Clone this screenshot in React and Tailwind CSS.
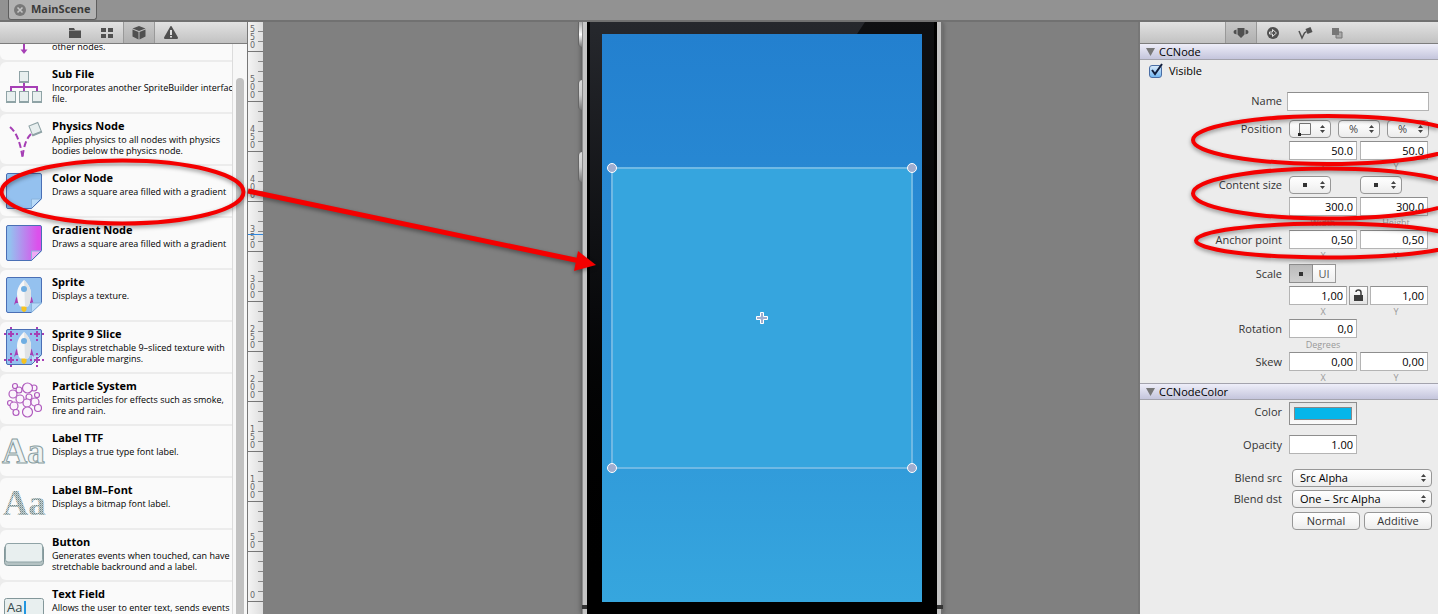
import React from "react";

const stroke = "#8fa3a6";
const paper = "#e8efef";
const purple = "#a63fb5";

function Rocket() {
  return (
    <g>
      <path d="M18 20l-2 3-2 7 2-2h4zM30 20l2 3 2 7-2-2h-4z" fill={purple} />
      <path d="M21.500 31h5v4q-2.500 4-5 0z" fill="#f6c21c" />
      <path d="M24 5c5 5 7 9 7 14 0 5-1 10-3 12.500h-8c-2-2.500-3-7.500-3-12.500 0-5 2-9 7-14z" fill="#f6f7f8" />
      <path d="M24 5c5 5 7 9 7 14 0 5-1 10-3 12.500h-3z" fill="#dfe3e6" />
      <circle cx="24" cy="14" r="3" fill="#6faee2" />
    </g>
  );
}

function Sheet({ fill, fold = "#b9dbf8" }) {
  return (
    <g>
      <path d="M8 2.500h32q1.500 0 1.500 1.500v23.500l-10 10H8q-1.500 0-1.500-1.500V4q0-1.500 1.500-1.500z" fill={fill} />
      <path d="M31.500 37.500v-9.500h10z" fill={fold} stroke="#8bb4de" strokeWidth="1" />
      <path d="M8 2.500h32q1.500 0 1.500 1.500v23.500l-10 10H8q-1.500 0-1.500-1.500V4q0-1.500 1.500-1.500z" fill="none" stroke="#4a6fb5" />
    </g>
  );
}

function Card({ x, y }) {
  return (
    <g>
      <rect x={x} y={y} width="9" height="11" fill={paper} stroke={stroke} />
      <path d={`M${x} ${y + 10.5}h9`} stroke={stroke} strokeWidth="2" />
    </g>
  );
}

function Plus({ x, y }) {
  return (
    <path
      d={`M${x - 3} ${y}h6M${x} ${y - 3}v6M${x - 7} ${y}h2M${x + 5} ${y}h2M${x} ${y - 7}v2M${x} ${y + 5}v2`}
      stroke={purple}
      strokeWidth="2"
    />
  );
}

const icons = {
  subfile: (
    <g>
      <path d="M24 15v9M11 24v-4h26v4" fill="none" stroke={purple} strokeWidth="2" />
      <Card x={19.5} y={4.5} />
      <Card x={6.5} y={24.5} />
      <Card x={19.5} y={24.5} />
      <Card x={32.5} y={24.5} />
    </g>
  ),
  physics: (
    <g>
      <path d="M10 8c6 5 10 14 12.500 30" fill="none" stroke={purple} strokeWidth="2" strokeDasharray="6 3" />
      <path d="M31 15c-5 5-7 12-8.500 23" fill="none" stroke={purple} strokeWidth="2" strokeDasharray="6 3" />
      <g transform="rotate(-22 35 10)">
        <rect x="30.500" y="5" width="9.500" height="10" fill={paper} stroke={stroke} />
        <path d="M30 15h10.500" stroke={stroke} strokeWidth="2" />
      </g>
    </g>
  ),
  color: <Sheet fill="#94c1ef" />,
  gradient: (
    <g>
      <defs>
        <linearGradient id="sheetGradient">
          <stop offset="0.1" stopColor="#94c1ef" />
          <stop offset="0.9" stopColor="#dc50ec" />
        </linearGradient>
      </defs>
      <Sheet fill="url(#sheetGradient)" fold="#efaaf5" />
    </g>
  ),
  sprite: (
    <g>
      <Sheet fill="#94c1ef" />
      <Rocket />
      <path d="M31.500 37.500v-9.500h10z" fill="#b9dbf8" stroke="#8bb4de" />
    </g>
  ),
  slice: (
    <g>
      <Sheet fill="#94c1ef" />
      <Rocket />
      <Plus x={11} y={7} />
      <Plus x={37} y={7} />
      <Plus x={11} y={33} />
      <Plus x={37} y={33} />
    </g>
  ),
  particles: (
    <g fill="#fbf4fc" stroke="#b05cbe" strokeWidth="1.200">
      <circle cx="15" cy="7" r="2.500" />
      <circle cx="34" cy="9" r="3" />
      <circle cx="27.500" cy="9" r="5" />
      <circle cx="13" cy="15" r="4" />
      <circle cx="19" cy="11" r="3" />
      <circle cx="37" cy="16" r="2.500" />
      <circle cx="29" cy="18" r="3" />
      <circle cx="20" cy="20" r="4" />
      <circle cx="10" cy="24" r="2.500" />
      <circle cx="14" cy="27" r="4" />
      <circle cx="27" cy="24" r="4" />
      <circle cx="35" cy="23" r="4" />
      <circle cx="38" cy="29" r="3.500" />
      <circle cx="16" cy="33.500" r="3" />
      <circle cx="27.500" cy="33" r="5" />
    </g>
  ),
  ttf: (
    <text x="2" y="32" fontFamily="Liberation Serif, serif" fontWeight="700" fontSize="35" fill="#eef3f3" stroke="#879c9f">Aa</text>
  ),
  bmfont: (
    <g>
      <defs>
        <pattern id="dots" width="2" height="2" patternUnits="userSpaceOnUse">
          <rect width="2" height="2" fill="#c3cfd0" />
          <rect width="1" height="1" fill="#6f8588" />
          <rect x="1" y="1" width="1" height="1" fill="#9aabad" />
        </pattern>
      </defs>
      <text x="3" y="32" fontFamily="Liberation Serif, serif" fontWeight="700" fontSize="35" fill="url(#dots)">Aa</text>
    </g>
  ),
  button: (
    <g>
      <rect x="4.500" y="10.500" width="39" height="20" rx="3" fill="#b4c2c3" stroke="#83979a" />
      <rect x="5.500" y="8.500" width="37" height="18.500" rx="2.500" fill={paper} stroke={stroke} />
    </g>
  ),
  field: (
    <g>
      <rect x="4.500" y="11.500" width="39" height="22" rx="2" fill={paper} stroke="#83979a" />
      <text x="7" y="25" fontFamily="Open Sans, sans-serif" fontSize="13" fill="#33474a">Aa</text>
      <path d="M25 14v14" stroke="#2196e0" strokeWidth="2" />
    </g>
  ),
};

const items = [
  ["subfile", "Sub File", ["Incorporates another SpriteBuilder interface", "file."]],
  ["physics", "Physics Node", ["Applies physics to all nodes with physics", "bodies below the physics node."]],
  ["color", "Color Node", ["Draws a square area filled with a gradient"]],
  ["gradient", "Gradient Node", ["Draws a square area filled with a gradient"]],
  ["sprite", "Sprite", ["Displays a texture."]],
  ["slice", "Sprite 9 Slice", ["Displays stretchable 9–sliced texture with", "configurable margins."]],
  ["particles", "Particle System", ["Emits particles for effects such as smoke,", "fire and rain."]],
  ["ttf", "Label TTF", ["Displays a true type font label."]],
  ["bmfont", "Label BM–Font", ["Displays a bitmap font label."]],
  ["button", "Button", ["Generates events when touched, can have", "stretchable backround and a label."]],
  ["field", "Text Field", ["Allows the user to enter text, sends events"]],
];

function ItemIcon({ name }) {
  return <svg aria-hidden="true" className="mt-[2px] h-[46px] w-[48px] shrink-0" viewBox="0 0 48 46">{icons[name]}</svg>;
}

function Library() {
  return (
    <div className="flex min-h-0 flex-1 bg-[#ececec]">
      <ul className="flex w-[232px] shrink-0 flex-col gap-[2px] overflow-hidden">
        <li className="flex h-[16px] shrink-0 items-end overflow-hidden rounded-bl-md bg-[#fafafa]">
          <svg aria-hidden="true" className="h-[16px] w-[48px] shrink-0" viewBox="0 0 48 16">
            <path d="M24 0v8" stroke={purple} strokeWidth="2" />
            <path d="M20.500 5.500h7l-3.500 4.500z" fill={purple} />
          </svg>
          <p className="h-[20px] pl-[4px] text-[9px] leading-[14px]">other nodes.</p>
        </li>
        {items.map(([icon, title, lines]) => (
          <li key={icon} className="flex h-[50px] shrink-0 items-start overflow-hidden rounded-l-md bg-[#fafafa] pt-[3px]">
            <ItemIcon name={icon} />
            <div className="pl-[4px] whitespace-nowrap">
              <h3 className="text-[11px] leading-[17px] font-bold">{title}</h3>
              {lines.map((line) => (
                <p key={line} className="text-[9px] leading-[11px]">{line}</p>
              ))}
            </div>
          </li>
        ))}
      </ul>
      <div className="flex flex-1 flex-col border-l border-[#dcdcdc] bg-[#f7f7f7] px-[3px] pt-[34px]">
        <div className="w-[8px] flex-1 rounded-t-full bg-[#c1c1c1]" />
      </div>
    </div>
  );
}

function Ruler() {
  const marks = [550, 500, 450, 400, 350, 300, 250, 200, 150, 100, 50, 0];
  return (
    <div className="relative flex w-[15px] shrink-0 flex-col overflow-hidden bg-gradient-to-r from-[#f4f4f4] to-[#dedede]">
      {marks.map((m) => (
        <div key={m} className="flex h-[50px] shrink-0 items-end justify-between border-b border-[#777] first:h-[30px]">
          <span className="flex flex-col pb-px pl-[2px] font-['DejaVu_Sans',sans-serif] text-[8px] leading-[8px] text-[#666]">
            {String(m).split("").map((d, i) => <span key={i}>{d}</span>)}
          </span>
          <span className="flex w-[5px] flex-col gap-[9px] pb-[9px]">
            {[0, 1, 2, 3].slice(m === 550 ? 2 : 0).map((t) => <span key={t} className="h-px bg-[#888]" />)}
          </span>
        </div>
      ))}
      <div className="absolute top-[212px] h-px w-full bg-[#2f86dc]" />
    </div>
  );
}

function Tool({ label, active, children }) {
  return (
    <button type="button" aria-label={label} className={active ? "flex h-full w-[32px] items-center justify-center border-x border-[#999] bg-gradient-to-b from-[#c8c8c8] to-[#b0b0b0]" : "flex h-full w-[32px] items-center justify-center"}>
      <svg className="h-[16px] w-[16px]" viewBox="0 0 16 16" fill="#505050">{children}</svg>
    </button>
  );
}

const barClass = "flex h-[22px] shrink-0 items-center justify-center border-b border-[#7d7d7d] bg-gradient-to-b from-[#e2e2e2] to-[#c2c2c2]";

function Handle({ className }) {
  return <span className={`absolute h-[10px] w-[10px] rounded-full border border-white bg-[#9fadcf] ${className}`} />;
}

function Stage() {
  return (
    <main className="flex min-w-0 flex-1 justify-center overflow-hidden bg-[#808080] pl-[123px]">
      <div className="relative flex w-[362px] shrink-0 border-l border-[#666] bg-[#c4c4c4] pr-[6px] pl-[5px] shadow-[0_0_5px_#555]">
        <span className="absolute top-0 -left-[4px] h-[25px] w-[4px] rounded-bl border-l border-[#666] bg-gradient-to-b from-[#aaa] via-white to-[#777]" />
        <span className="absolute top-[58px] -left-[4px] h-[30px] w-[4px] rounded-l border-l border-[#666] bg-gradient-to-b from-[#ddd] via-[#ccc] to-[#777]" />
        <span className="absolute top-[130px] -left-[4px] h-[30px] w-[4px] rounded-l border-l border-[#666] bg-gradient-to-b from-[#ddd] via-[#ccc] to-[#777]" />
        <span className="absolute inset-y-0 right-0 w-[2px] bg-[#707070]" />
        <span className="absolute inset-y-0 left-0 w-px bg-[#8c8c8c]" />
        <span className="absolute top-[583px] left-0 h-[4px] w-full bg-[#333]" />
        <div className="relative flex flex-1 flex-col border-l-[3px] border-black bg-gradient-to-b from-[#26282d] to-black pr-[15px] pl-[12px]">
          <svg aria-hidden="true" className="absolute top-0 right-0 h-full w-[90px]" viewBox="0 0 90 592" preserveAspectRatio="none">
            <path d="M18 0h72v592h-15V12H10z" fill="#000" fillOpacity="0.600" />
            <path d="M87 0h3v592h-3z" fill="#000" />
          </svg>
          <div className="relative mt-[12px] h-[568px] bg-gradient-to-b from-[#2380cf] via-[#2c90d6] to-[#36a6de] px-[9px] pt-[133px]">
            <div className="relative flex h-[302px] items-center justify-center border-2 border-[#70b9e4] bg-[#36a5de]">
              <Handle className="-top-[6px] -left-[6px]" />
              <Handle className="-top-[6px] -right-[6px]" />
              <Handle className="-bottom-[6px] -left-[6px]" />
              <Handle className="-right-[6px] -bottom-[6px]" />
              <svg aria-hidden="true" className="h-[14px] w-[14px]" viewBox="0 0 14 14">
                <path d="M5.500 1.500h3v4h4v3h-4v4h-3v-4h-4v-3h4z" fill="#9fadcf" stroke="#fff" />
              </svg>
            </div>
          </div>
        </div>
      </div>
    </main>
  );
}

function Section({ title, className }) {
  return (
    <h2 className={`flex shrink-0 items-center gap-[4px] border-[#a3a3ad] bg-gradient-to-b from-[#eeeef9] to-[#c4c5dc] pl-[6px] text-[11px] leading-[14px] text-black ${className}`}>
      <svg aria-hidden="true" className="h-[8px] w-[9px]" viewBox="0 0 9 8"><path d="M0 0h9L4.500 8z" fill="#777" /></svg>
      {title}
    </h2>
  );
}

function Label({ htmlFor, tall, children }) {
  return (
    <label htmlFor={htmlFor} className={`w-[142px] shrink-0 text-right text-[11px] whitespace-nowrap text-[#333] ${tall ? "leading-[20px]" : "leading-[18px]"}`}>
      {children}
    </label>
  );
}

function Row({ label, id, tall, className = "", children }) {
  return (
    <div className={`flex items-start gap-[7px] ${className}`}>
      <Label htmlFor={id} tall={tall}>{label}</Label>
      <div className="flex flex-col">{children}</div>
    </div>
  );
}

function Num({ id, name, value, width = "w-[68px]" }) {
  return <input id={id} aria-label={id ? undefined : name} defaultValue={value} className={`h-[19px] border border-[#b4b4b4] border-t-[#8e8e8e] bg-white px-[3px] text-right text-[11px] leading-[17px] text-black ${width}`} />;
}

function Arrows() {
  return (
    <svg aria-hidden="true" className="pointer-events-none absolute top-[5px] right-[6px] h-[8px] w-[5px]" viewBox="0 0 5 8"><path d="M0 3L2.500 0 5 3zM0 5h5L2.500 8z" fill="#444" /></svg>
  );
}

const face = "rounded-[4px] border border-[#979797] bg-gradient-to-b from-white via-[#f7f7f7] to-[#ececec] text-[11px] leading-[16px]";

function Mini({ id, name, children, text }) {
  return (
    <span className="relative block h-[18px] w-[42px]">
      <select id={id} aria-label={name} className={`block h-[18px] w-full appearance-none pl-[10px] text-[#444] ${face}`}>
        <option>{text}</option>
      </select>
      {children}
      <Arrows />
    </span>
  );
}

function Dot() {
  return <span className="pointer-events-none absolute top-[7px] left-[14px] h-[4px] w-[4px] bg-[#333]" />;
}

function Captions({ a, b }) {
  return (
    <div className="flex h-[14px] gap-[3px] text-center text-[9px] leading-[14px] text-[#999]">
      <span className="w-[68px]">{a}</span>
      <span className="w-[72px]">{b}</span>
    </div>
  );
}

function Inspector() {
  return (
    <aside aria-label="Inspector" className="flex w-[300px] shrink-0 flex-col overflow-hidden border-l-2 border-[#777] bg-[#ececec]">
      <div className={barClass}>
        <Tool label="Item properties" active>
          <path d="M4.500 3h7v6.500L8 13 4.500 9.500zM3.500 4.500v5L1 8.500q-1-1.500 0-3zM12.500 4.500v5l2.500-1q1-1.500 0-3z" />
        </Tool>
        <Tool label="Code connections">
          <circle cx="8" cy="8" r="6" />
          <path d="M4.500 7h3V4.500L11.500 8l-4 3.500V9h-3z" fill="#505050" stroke="#ddd" />
        </Tool>
        <Tool label="Physics">
          <path d="M8.500 4l5-2 2 5-5 2z" />
          <path d="M2 6l3 7 2.500-5 2-1.500" fill="none" stroke="#505050" strokeWidth="1.500" />
        </Tool>
        <Tool label="Templates">
          <path d="M7 7h6v6H7z" fill="#aaa" stroke="#777" />
          <path d="M3 3h7v7H3z" fill="#777" />
        </Tool>
      </div>
      <Section title="CCNode" className="h-[16px] border-b" />
      <label className="flex h-[22px] items-center gap-[7px] pl-[9px] text-[11px]">
        <span className="relative block h-[13px] w-[13px]">
          <input type="checkbox" defaultChecked className="block h-[13px] w-[13px] appearance-none rounded-[3px] border border-[#4a6ea5] bg-gradient-to-b from-[#d6e9fb] to-[#74b8f2]" />
          <svg aria-hidden="true" className="pointer-events-none absolute -top-[2px] left-0 h-[14px] w-[15px]" viewBox="0 0 15 14"><path d="M3 7l3 4L13 1" fill="none" stroke="#111e3c" strokeWidth="2" /></svg>
        </span>
        Visible
      </label>
      <div className="flex gap-[5px] pt-[10px]">
        <Label htmlFor="name">Name</Label>
        <input id="name" className="h-[19px] w-[142px] border border-[#b4b4b4] border-t-[#8e8e8e] bg-white px-[3px] text-[11px]" />
      </div>
      <Row label="Position" id="pos" className="mt-[9px]">
        <div className="flex gap-[7px] pb-[3px]">
          <Mini id="pos" text="">
            <svg aria-hidden="true" className="pointer-events-none absolute top-[3px] left-[9px] h-[13px] w-[13px]" viewBox="0 0 13 13">
              <path d="M1.500 0.500h11v11h-11z" fill="none" stroke="#777" />
              <path d="M0 10h3v3H0z" fill="#222" />
            </svg>
          </Mini>
          <Mini name="X unit" text="%" />
          <Mini name="Y unit" text="%" />
        </div>
        <div className="flex gap-[3px]"><Num name="Position X" value="50.0" /><Num name="Position Y" value="50.0" /></div>
        <Captions a="X" b="Y" />
      </Row>
      <Row label="Content size" id="size" className="mt-[2px]">
        <div className="flex gap-[29px] pb-[3px]">
          <Mini id="size" text=""><Dot /></Mini>
          <Mini name="Height unit" text=""><Dot /></Mini>
        </div>
        <div className="flex gap-[3px]"><Num name="Width" value="300.0" /><Num name="Height" value="300.0" /></div>
        <Captions a="Width" b="Height" />
      </Row>
      <Row label="Anchor point" id="anchor" tall>
        <div className="flex gap-[3px]"><Num id="anchor" value="0,50" /><Num name="Anchor Y" value="0,50" /></div>
        <Captions a="X" b="Y" />
      </Row>
      <Row label="Scale" id="scale" tall className="mt-px">
        <div className="flex pb-[3px]">
          <button type="button" aria-label="Scale unit" className="flex h-[19px] w-[24px] items-center justify-center border border-[#8e8e8e] bg-gradient-to-b from-[#bbb] to-[#cfcfcf]"><span className="h-[4px] w-[4px] bg-[#333]" /></button>
          <button type="button" className="h-[19px] w-[23px] border border-l-0 border-[#9a9a9a] bg-gradient-to-b from-white to-[#eee] text-[11px] leading-[17px] text-[#555]">UI</button>
        </div>
        <div className="flex gap-[2px]">
          <Num id="scale" value="1,00" width="w-[58px]" />
          <button type="button" aria-label="Lock scale" className="flex h-[19px] w-[19px] items-center justify-center border border-[#9a9a9a] bg-gradient-to-b from-white to-[#e4e4e4]">
            <svg className="h-[13px] w-[11px]" viewBox="0 0 11 13"><path d="M1 6h9v6H1z" fill="#3c3c3c" /><path d="M3 3q0-2 2.500-2T8 3.500V6" fill="none" stroke="#3c3c3c" strokeWidth="1.500" /></svg>
          </button>
          <Num name="Scale Y" value="1,00" width="w-[58px]" />
        </div>
        <Captions a="X" b="Y" />
      </Row>
      <Row label="Rotation" id="rotation" tall>
        <Num id="rotation" value="0,0" />
        <Captions a="Degrees" />
      </Row>
      <Row label="Skew" id="skew" tall>
        <div className="flex gap-[3px]"><Num id="skew" value="0,00" /><Num name="Skew Y" value="0,00" /></div>
        <Captions a="X" b="Y" />
      </Row>
      <Section title="CCNodeColor" className="-mt-[2px] h-[17px] border-y" />
      <Row label="Color" id="color" tall className="mt-[2px]">
        <button id="color" type="button" className="h-[23px] w-[68px] border border-[#8e8e8e] bg-gradient-to-b from-[#e6e6e6] to-[#fbfbfb] p-[4px]"><span className="block h-full border border-[#888] bg-[#06b6ea]" /></button>
      </Row>
      <Row label="Opacity" id="opacity" tall className="mt-[10px]"><Num id="opacity" value="1.00" /></Row>
      {[["src", "Src Alpha", "mt-[14px]"], ["dst", "One – Src Alpha", "mt-[3px]"]].map(([k, v, m]) => (
        <div key={k} className={`flex gap-[10px] ${m}`}>
          <Label htmlFor={k}>Blend {k}</Label>
          <span className="relative block h-[18px] w-[140px]">
            <select id={k} className={`block h-[18px] w-full appearance-none pl-[7px] text-black ${face}`}><option>{v}</option></select>
            <Arrows />
          </span>
        </div>
      ))}
      <div className="flex gap-[4px] pt-[4px] pl-[152px]">
        <button type="button" className={`h-[18px] w-[68px] text-[#333] ${face}`}>Normal</button>
        <button type="button" className={`h-[18px] w-[68px] text-[#333] ${face}`}>Additive</button>
      </div>
    </aside>
  );
}

export default function App() {
  return (
    <div className="relative flex h-screen flex-col overflow-hidden bg-[#ececec] font-['Open_Sans','Noto_Sans',sans-serif] text-black">
      <header className="flex h-[22px] shrink-0 items-start border-b-2 border-[#717171] bg-[#929292] pl-[8px]">
        <div className="flex h-[20px] items-center gap-[5px] rounded-b-[3px] border border-t-0 border-[#5e5e5e] bg-[#b2b2b2] px-[5px]">
          <button type="button" aria-label="Close tab">
            <svg className="block h-[12px] w-[12px]" viewBox="0 0 12 12"><circle cx="6" cy="6" r="6" fill="#787878" /><path d="M3.500 3.500l5 5m0-5l-5 5" stroke="#c4c4c4" strokeWidth="1.600" /></svg>
          </button>
          <span className="text-[11px] font-bold text-[#3a3a3a]">MainScene</span>
        </div>
      </header>
      <div className="flex min-h-0 flex-1">
        <aside aria-label="Library" className="flex w-[248px] shrink-0 flex-col border-r border-[#777]">
          <div className={`${barClass} pr-[2px]`}>
            <Tool label="Files"><path d="M2 3h5l1 2H2zM2 5.500h12V13H2z" /></Tool>
            <Tool label="Tiles"><path d="M2 3h5v4H2zM9 3h5v4H9zM2 9h5v4H2zM9 9h5v4H9z" /></Tool>
            <Tool label="Objects" active>
              <path d="M8 1l6.500 2.500L8 6 1.500 3.500zM1.500 4.500l6 2.500v7.500l-6-3zM14.500 4.500l-6 2.500v7.500l6-3z" />
            </Tool>
            <Tool label="Warnings">
              <path d="M8 1q0.700 0 1 1l6 10.500q0 1.500-1 1.500H2q-1 0-1-1.500L7 2q0.300-1 1-1z" />
              <path d="M8 5v5M8 11v1.500" stroke="#ddd" strokeWidth="2" />
            </Tool>
          </div>
          <Library />
        </aside>
        <Ruler />
        <Stage />
        <Inspector />
      </div>
      <svg aria-hidden="true" className="pointer-events-none absolute top-0 left-0 h-[300px] w-[620px] drop-shadow-[0_2px_2px_rgba(0,0,0,0.4)]" viewBox="0 0 620 300">
        <ellipse cx="122.500" cy="192" rx="121" ry="31.500" fill="none" stroke="#f40000" strokeWidth="4" />
        <path d="M248 191L580 261" stroke="#f40000" strokeWidth="5" />
        <path d="M596 265L574 271L578 251z" fill="#f40000" />
      </svg>
      <svg aria-hidden="true" className="pointer-events-none absolute top-0 right-0 h-[300px] w-[258px] drop-shadow-[0_2px_2px_rgba(0,0,0,0.4)]" viewBox="1180 0 258 300" fill="none" stroke="#f40000" strokeWidth="4">
        <ellipse cx="1328" cy="140" rx="135" ry="24" />
        <ellipse cx="1328" cy="193.500" rx="135" ry="25" />
        <ellipse cx="1328" cy="240.500" rx="132" ry="17" />
      </svg>
    </div>
  );
}
